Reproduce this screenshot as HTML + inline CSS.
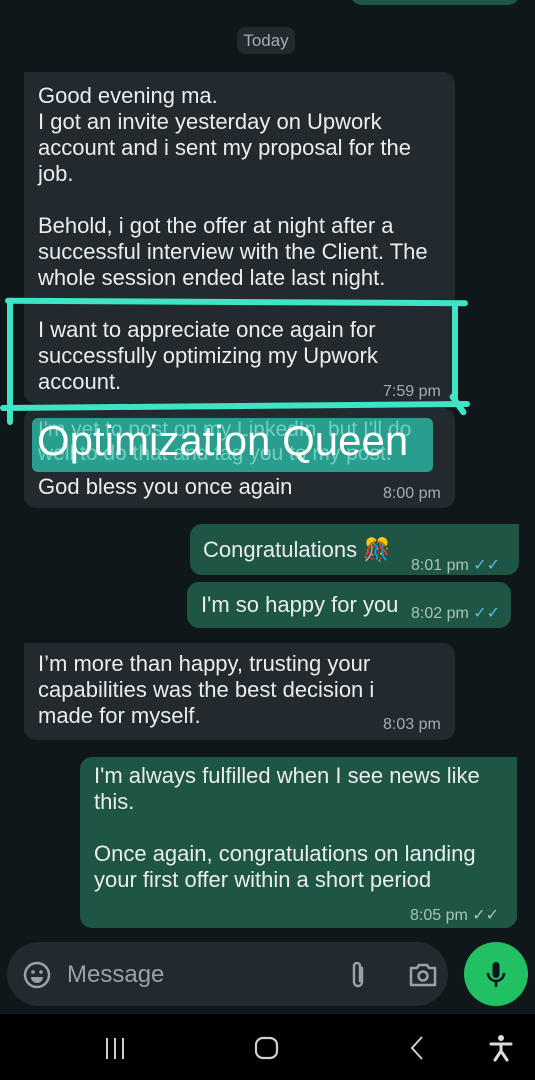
<!DOCTYPE html>
<html><head><meta charset="utf-8">
<style>
*{margin:0;padding:0;box-sizing:border-box}
body{width:535px;height:1080px;background:#0f171b;font-family:"Liberation Sans",sans-serif;color:#e9edef;position:relative;overflow:hidden}
.a{position:absolute}
.in{background:#222a2f;border-radius:12px}
.out{background:#1f5545;border-radius:12px}
.t{font-size:22px;line-height:26px;white-space:pre}
.tm{font-size:16px;color:#a4adb2;position:absolute}
.to{color:#a9c3ba}
.ln{position:absolute;background:#3fe3c6;border-radius:3px}
</style></head><body>
<div class="a out" style="left:350px;top:-20px;width:170px;height:25px"></div>
<div class="a in" style="left:237px;top:27px;width:58px;height:27px;border-radius:8px;font-size:17px;color:#a4adb2;text-align:center;line-height:27px">Today</div>

<div class="a in" style="left:24px;top:72px;width:431px;height:332px;border-top-left-radius:0"></div>
<div class="a t" style="left:38px;top:83px">Good evening ma.
I got an invite yesterday on Upwork
account and i sent my proposal for the
job.

Behold, i got the offer at night after a
successful interview with the Client. The
whole session ended late last night.

I want to appreciate once again for
successfully optimizing my Upwork
account.</div>
<div class="tm" style="left:383px;top:383px">7:59 pm</div>

<div class="a in" style="left:24px;top:408px;width:431px;height:100px"></div>
<div class="a" style="left:32px;top:418px;width:401px;height:54px;background:#2a9e8e;border-radius:6px"></div>
<div class="a t" style="left:38px;top:418px;color:#6fd0c0;font-size:21px;line-height:24px">I'm yet to post on my LinkedIn, but I'll do
well to do that and tag you to my post.</div>
<div class="a" style="left:37px;top:418px;font-size:42px;line-height:46px;color:#fff;white-space:pre">Optimization Queen</div>
<div class="a t" style="left:38px;top:474px">God bless you once again</div>
<div class="tm" style="left:383px;top:485px">8:00 pm</div>

<div class="ln" style="left:5px;top:299px;width:463px;height:6px;transform:rotate(0.3deg)"></div>
<div class="ln" style="left:7px;top:300px;width:6px;height:125px"></div>
<div class="ln" style="left:452px;top:302px;width:6px;height:104px"></div>
<div class="ln" style="left:0px;top:403px;width:470px;height:6px;transform:rotate(-0.5deg)"></div>
<div class="ln" style="left:455px;top:392px;width:6px;height:25px;transform:rotate(-35deg)"></div>

<div class="a out" style="left:190px;top:524px;width:329px;height:51px;border-top-right-radius:0"></div>
<div class="a t" style="left:203px;top:537px">Congratulations <span style="font-size:22px">🎊</span></div>
<div class="tm to" style="left:411px;top:555px">8:01 pm <span style="color:#53bdeb">✓✓</span></div>

<div class="a out" style="left:187px;top:582px;width:324px;height:46px"></div>
<div class="a t" style="left:201px;top:592px">I'm so happy for you</div>
<div class="tm to" style="left:411px;top:603px">8:02 pm <span style="color:#53bdeb">✓✓</span></div>

<div class="a in" style="left:24px;top:643px;width:431px;height:97px;border-top-left-radius:0"></div>
<div class="a t" style="left:38px;top:651px">I’m more than happy, trusting your
capabilities was the best decision i
made for myself.</div>
<div class="tm" style="left:383px;top:716px">8:03 pm</div>

<div class="a out" style="left:80px;top:757px;width:437px;height:171px;border-top-right-radius:0"></div>
<div class="a t" style="left:94px;top:763px">I'm always fulfilled when I see news like
this.

Once again, congratulations on landing
your first offer within a short period</div>
<div class="tm to" style="left:410px;top:905px">8:05 pm <span style="color:#a9c3ba">✓✓</span></div>

<div class="a" style="left:7px;top:942px;width:441px;height:64px;border-radius:32px;background:#222a2f"></div>
<svg class="a" style="left:22px;top:960px" width="30" height="30" viewBox="0 0 30 30"><circle cx="15" cy="15" r="12" fill="none" stroke="#9aa2a7" stroke-width="2.5"/><circle cx="11" cy="12" r="1.8" fill="#9aa2a7"/><circle cx="19" cy="12" r="1.8" fill="#9aa2a7"/><path d="M9 17h12a6 6 0 0 1-12 0z" fill="#9aa2a7"/></svg>
<div class="a" style="left:67px;top:961px;font-size:24px;color:#9aa2a7">Message</div>
<svg class="a" style="left:345px;top:959px" width="26" height="32" viewBox="0 0 26 32"><path d="M17 9v14a4 4 0 0 1-8 0V7a3 3 0 0 1 6 0v15" fill="none" stroke="#9aa2a7" stroke-width="2.5" stroke-linecap="round"/></svg>
<svg class="a" style="left:407px;top:960px" width="32" height="30" viewBox="0 0 32 30"><path d="M4 8h6l2-3h8l2 3h6v17H4z" fill="none" stroke="#9aa2a7" stroke-width="2.5" stroke-linejoin="round"/><circle cx="16" cy="16" r="4.5" fill="none" stroke="#9aa2a7" stroke-width="2.5"/></svg>
<div class="a" style="left:464px;top:942px;width:64px;height:64px;border-radius:50%;background:#21c063"></div>
<svg class="a" style="left:484px;top:960px" width="24" height="30" viewBox="0 0 24 30"><rect x="8.5" y="2" width="7" height="16" rx="3.5" fill="#0b141a"/><path d="M4 13a8 8 0 0 0 16 0M12 21v6" fill="none" stroke="#0b141a" stroke-width="2.5"/></svg>

<div class="a" style="left:0;top:1014px;width:535px;height:66px;background:#000"></div>
<svg class="a" style="left:100px;top:1034px" width="340" height="28" viewBox="0 0 340 28"><path d="M7 4v21M15 4v21M23 4v21" stroke="#cfcfcf" stroke-width="2"/><rect x="156" y="4" width="21" height="20" rx="7" fill="none" stroke="#cfcfcf" stroke-width="2.2"/><path d="M322 3l-10 11 10 11" fill="none" stroke="#cfcfcf" stroke-width="2"/></svg>
<svg class="a" style="left:488px;top:1034px" width="26" height="28" viewBox="0 0 26 28"><circle cx="13" cy="4" r="3" fill="#ddd"/><path d="M3 10h20M13 10v7M13 17l-6 9M13 17l6 9" stroke="#ddd" stroke-width="3" stroke-linecap="round"/></svg>
</body></html>
